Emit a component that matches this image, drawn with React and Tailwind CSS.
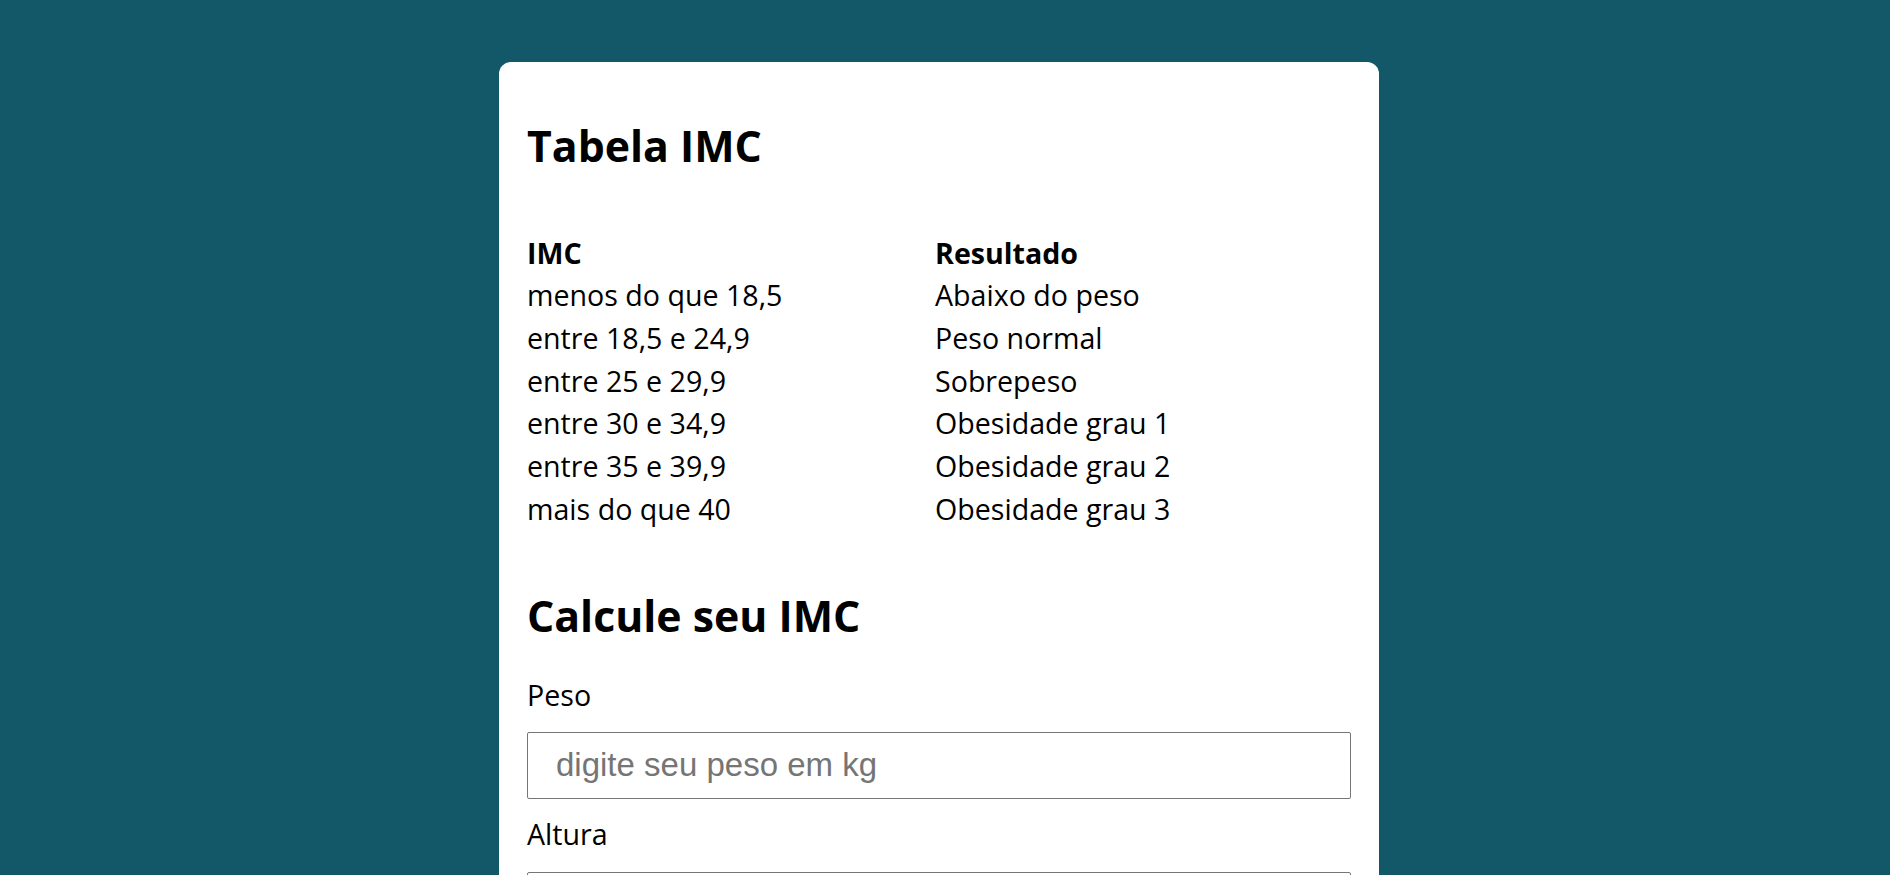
import React, { useState } from 'react';

const faixas = [
  { imc: 'menos do que 18,5', resultado: 'Abaixo do peso' },
  { imc: 'entre 18,5 e 24,9', resultado: 'Peso normal' },
  { imc: 'entre 25 e 29,9', resultado: 'Sobrepeso' },
  { imc: 'entre 30 e 34,9', resultado: 'Obesidade grau 1' },
  { imc: 'entre 35 e 39,9', resultado: 'Obesidade grau 2' },
  { imc: 'mais do que 40', resultado: 'Obesidade grau 3' },
];

function App() {
  const [peso, setPeso] = useState('');
  const [altura, setAltura] = useState('');

  const inputClass =
    "w-full h-[67px] border border-[#767676] rounded-[2px] px-[28px] text-[33px] text-black placeholder:text-[#757575] font-['Liberation_Sans',Arial,sans-serif] outline-none";

  return (
    <div className="min-h-screen bg-[#125868] pt-[62px] flex justify-center pr-3 font-['Open_Sans',sans-serif] text-black">
      <div className="w-[880px] bg-white rounded-xl px-7 pt-[54px] pb-10">
        <h1 className="text-[42.8px] leading-[60px] font-bold">Tabela IMC</h1>

        <div className="mt-[55.5px] grid grid-cols-[408px_1fr] text-[28.6px] leading-[42.67px]">
          <span className="font-bold">IMC</span>
          <span className="font-bold">Resultado</span>
          {faixas.map((f) => (
            <React.Fragment key={f.imc}>
              <span>{f.imc}</span>
              <span>{f.resultado}</span>
            </React.Fragment>
          ))}
        </div>

        <h2 className="mt-[56px] text-[42.8px] leading-[60px] font-bold">Calcule seu IMC</h2>

        <form onSubmit={(e) => e.preventDefault()} className="text-[28.6px] leading-[42.67px]">
          <label htmlFor="peso" className="block mt-[28px]">Peso</label>
          <input
            id="peso"
            type="text"
            value={peso}
            onChange={(e) => setPeso(e.target.value)}
            placeholder="digite seu peso em kg"
            className={"mt-[15px] " + inputClass}
          />
          <label htmlFor="altura" className="block mt-[14.5px]">Altura</label>
          <input
            id="altura"
            type="text"
            value={altura}
            onChange={(e) => setAltura(e.target.value)}
            placeholder="digite sua altura em metros"
            className={"mt-[15.5px] " + inputClass}
          />
          <button
            type="submit"
            className="mt-8 w-full h-[67px] bg-[#125868] text-white rounded-[2px] font-bold"
          >
            Calcular
          </button>
        </form>
      </div>
    </div>
  );
}

export default App;
